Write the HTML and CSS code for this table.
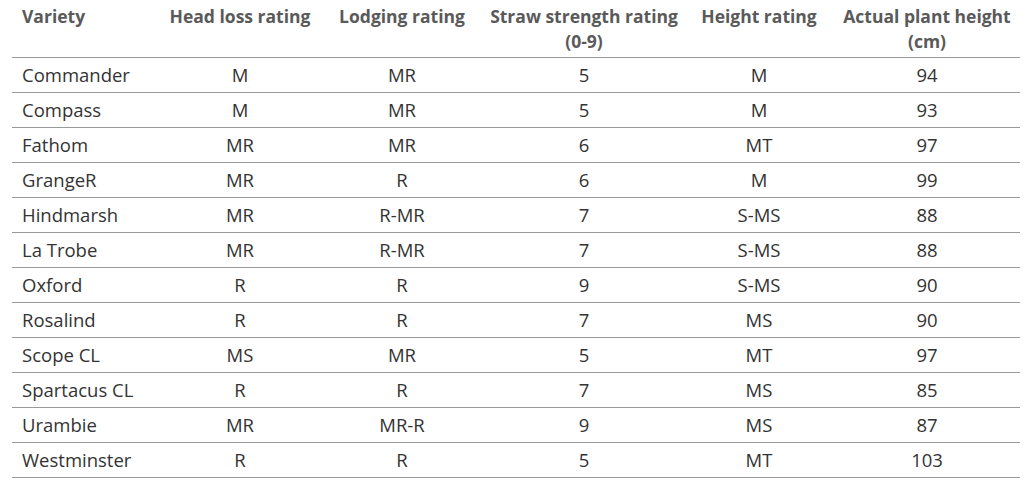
FILE: index.html
```html
<!DOCTYPE html>
<html>
<head>
<meta charset="utf-8">
<link rel="stylesheet" href="styles.css">
</head>
<body>
<table class="trial">
  <colgroup>
    <col class="c-variety"><col class="c-head"><col class="c-lodge"><col class="c-straw"><col class="c-height"><col class="c-actual">
  </colgroup>
  <thead>
    <tr>
      <th class="left">Variety</th>
      <th>Head loss rating</th>
      <th>Lodging rating</th>
      <th>Straw strength rating<br>(0-9)</th>
      <th>Height rating</th>
      <th>Actual plant height<br>(cm)</th>
    </tr>
  </thead>
  <tbody>
    <tr><td class="left">Commander</td><td>M</td><td>MR</td><td>5</td><td>M</td><td>94</td></tr>
    <tr><td class="left">Compass</td><td>M</td><td>MR</td><td>5</td><td>M</td><td>93</td></tr>
    <tr><td class="left">Fathom</td><td>MR</td><td>MR</td><td>6</td><td>MT</td><td>97</td></tr>
    <tr><td class="left">GrangeR</td><td>MR</td><td>R</td><td>6</td><td>M</td><td>99</td></tr>
    <tr><td class="left">Hindmarsh</td><td>MR</td><td>R-MR</td><td>7</td><td>S-MS</td><td>88</td></tr>
    <tr><td class="left">La Trobe</td><td>MR</td><td>R-MR</td><td>7</td><td>S-MS</td><td>88</td></tr>
    <tr><td class="left">Oxford</td><td>R</td><td>R</td><td>9</td><td>S-MS</td><td>90</td></tr>
    <tr><td class="left">Rosalind</td><td>R</td><td>R</td><td>7</td><td>MS</td><td>90</td></tr>
    <tr><td class="left">Scope CL</td><td>MS</td><td>MR</td><td>5</td><td>MT</td><td>97</td></tr>
    <tr><td class="left">Spartacus CL</td><td>R</td><td>R</td><td>7</td><td>MS</td><td>85</td></tr>
    <tr><td class="left">Urambie</td><td>MR</td><td>MR-R</td><td>9</td><td>MS</td><td>87</td></tr>
    <tr><td class="left">Westminster</td><td>R</td><td>R</td><td>5</td><td>MT</td><td>103</td></tr>
  </tbody>
</table>
</body>
</html>
```
FILE: styles.css
```css
html, body {
  margin: 0;
  padding: 0;
  background: #ffffff;
}

.trial {
  margin-left: 12px;
  width: 1008px;
  border-collapse: collapse;
  table-layout: fixed;
  font-family: "Open Sans", "Noto Sans", sans-serif;
}

.c-variety { width: 148px; }
.c-head { width: 160px; }
.c-lodge { width: 164px; }
.c-straw { width: 200px; }
.c-height { width: 150px; }
.c-actual { width: 186px; }

.trial th {
  height: 57px;
  padding: 4px 0 0 0;
  box-sizing: border-box;
  vertical-align: top;
  text-align: center;
  font-size: 17.5px;
  line-height: 25px;
  font-weight: 700;
  color: #5a5a5a;
  border-bottom: 1px solid #9a9a9a;
  white-space: nowrap;
}

.trial td {
  height: 34px;
  padding: 0;
  text-align: center;
  vertical-align: middle;
  font-size: 18.5px;
  font-weight: 400;
  color: #333333;
  border-bottom: 1px solid #9a9a9a;
}

.trial .left {
  text-align: left;
  padding-left: 10px;
}
```
